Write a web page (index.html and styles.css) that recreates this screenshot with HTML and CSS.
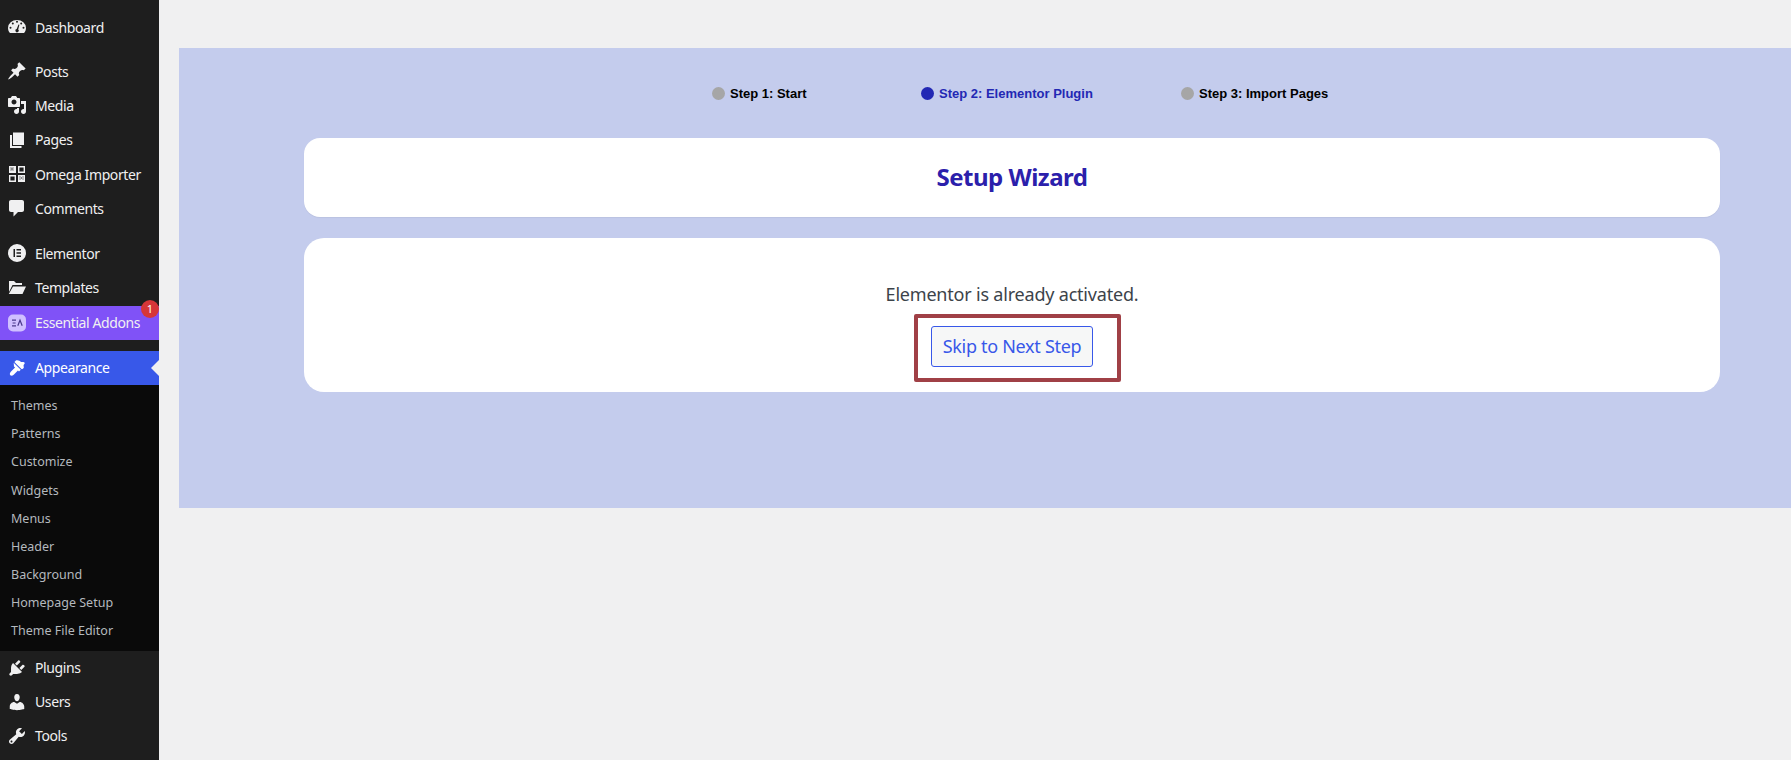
FILE: index.html
```html
<!DOCTYPE html>
<html lang="en">
<head>
<meta charset="utf-8">
<title>Setup Wizard</title>
<link rel="stylesheet" href="styles.css">
</head>
<body>
<div class="layout">
  <nav class="sidebar">
    <ul class="menu menu-first">
      <li class="item"><svg class="ico" viewBox="0 0 20 20"><path fill-rule="evenodd" d="M3 16h14c1.300-1.400 2-3.200 2-5a9 8 0 1 0-18 0c0 1.800.7 3.600 2 5zM10 3.800a1 1 0 1 1 0 2 1 1 0 0 1 0-2zM5.800 5.500a1 1 0 1 1 0 2 1 1 0 0 1 0-2zm8.400 0a1 1 0 1 1 0 2 1 1 0 0 1 0-2zM3.500 9.800a1 1 0 1 1 0 2 1 1 0 0 1 0-2zm13 0a1 1 0 1 1 0 2 1 1 0 0 1 0-2zM11.500 7.500l.9.3-1.200 4.600a1.700 1.700 0 1 1-1.500-.4z"/></svg><span>Dashboard</span></li>
    </ul>
    <ul class="menu menu-posts">
      <li class="item"><svg class="ico" viewBox="0 0 20 20"><path d="M10.440 3.020l1.820-1.820 6.360 6.350-1.830 1.820c-1.050-.68-2.480-.57-3.410.36l-.75.75c-.92.93-1.040 2.350-.35 3.410l-1.830 1.820-2.410-2.410-2.800 2.790c-.42.42-3.380 2.710-3.800 2.290s1.860-3.390 2.280-3.810l2.790-2.790L4.100 9.360l1.830-1.820c1.050.69 2.480.57 3.400-.36l.75-.75c.93-.92 1.050-2.350.36-3.410z"/></svg><span>Posts</span></li>
      <li class="item"><svg class="ico" viewBox="0 0 20 20"><path d="M13 11V4c0-.55-.45-1-1-1h-1.670L9 1H5L3.670 3H2c-.55 0-1 .45-1 1v7c0 .55.45 1 1 1h10c.55 0 1-.45 1-1zM7 4.500c1.380 0 2.500 1.120 2.500 2.500S8.380 9.500 7 9.500 4.500 8.380 4.500 7 5.620 4.500 7 4.500zM14 6h5v10.500c0 1.380-1.120 2.500-2.500 2.500S14 17.880 14 16.500s1.120-2.500 2.500-2.500c.17 0 .34.020.5.050V9h-3V6zm-4 8.050V13h2v3.500c0 1.380-1.120 2.500-2.500 2.500S7 17.880 7 16.500 8.120 14 9.500 14c.17 0 .34.020.5.050z"/></svg><span>Media</span></li>
      <li class="item"><svg class="ico" viewBox="0 0 20 20"><path d="M6 15V2.500h11V15zM5 16h9.500v2H3V5h2z"/></svg><span>Pages</span></li>
      <li class="item"><svg class="ico" viewBox="0 0 20 20"><path fill-rule="evenodd" d="M2 2h7v7H2zm1.500 1.500v1h1v-1zm2 0v1h1v-1zm-1 1.100v1h1v-1zm-1 1v1h1v-1zm2 0v1h1v-1zM11 2h7v7h-7zm1.400 1.400v4.200h4.200V3.400zM2 11h7v7H2zm1.400 1.400v4.200h4.200v-4.200zM11 11h7v7h-7zm1.500 1.500v1h1v-1zm3 0v1h1v-1zm-1.500 1v1h1v-1zm-1.500 1.100v1h1v-1zm3 0v1h1v-1z"/></svg><span>Omega Importer</span></li>
      <li class="item"><svg class="ico" viewBox="0 0 20 20"><path d="M4 2h11c1.100 0 2 .9 2 2v8c0 1.100-.9 2-2 2h-4l-4.500 4.500V14H4c-1.100 0-2-.9-2-2V4c0-1.100.9-2 2-2z"/></svg><span>Comments</span></li>
    </ul>
    <ul class="menu menu-elementor">
      <li class="item"><svg class="ico" viewBox="0 0 20 20"><path fill-rule="evenodd" d="M10 1a9 9 0 1 1 0 18 9 9 0 0 1 0-18zM6.500 6v8H8V6zm3 0v1.500H14V6zm0 3.200v1.500H14V9.200zm0 3.300V14H14v-1.500z"/></svg><span>Elementor</span></li>
      <li class="item"><svg class="ico" viewBox="0 0 20 20"><path d="M2 4h5l2 2h6v2H5.500L2 15zM6 9.500h13L15.500 17H1.800z"/></svg><span>Templates</span></li>
      <li class="item item-ea"><svg class="ico" viewBox="0 0 20 20"><rect x="1" y="1.500" width="18" height="17" rx="5" fill="#d0c0ff"/><path d="M5 7.200h4M5.600 10h3M5 12.800h4M10.800 12.800l2.200-5.600 2.200 5.600" fill="none" stroke="#4a3a8c" stroke-width="1.200"/></svg><span>Essential Addons</span><b class="badge">1</b></li>
    </ul>
    <ul class="menu menu-appearance">
      <li class="item item-current"><svg class="ico" viewBox="0 0 20 20"><path d="M14.480 11.060L7.410 3.990l1.500-1.500c.5-.560 2.300-.470 3.510.320 1.210.8 1.430 1.280 2.410 1.280.98 0 2.400-.4 2.800.6.4 1-.7 1.300-1 2.400-.2.900.2 1.600.2 2.500 0 1-1.800 2-2.350 1.470zM6.700 4.700l7.070 7.070-1.770 1.770-1.060-1.060-4.240 4.240c-.6.600-2.400 1.500-3.400.5s-.1-2.800.5-3.400l4.240-4.240-1.060-1.060z"/></svg><span>Appearance</span><i class="caret"></i></li>
      <li>
        <ul class="submenu">
          <li>Themes</li>
          <li>Patterns</li>
          <li>Customize</li>
          <li>Widgets</li>
          <li>Menus</li>
          <li>Header</li>
          <li>Background</li>
          <li>Homepage Setup</li>
          <li>Theme File Editor</li>
        </ul>
      </li>
      <li class="item"><svg class="ico" viewBox="0 0 20 20"><path d="M13.110 4.360L9.870 7.600 8 5.730l3.240-3.240c.35-.34 1.050-.2 1.560.32.52.51.66 1.210.31 1.550zm-8 1.770l.91-1.120 9.010 9.010-1.190.84c-.71.71-2.630 1.160-3.820 1.160H6.140L4.900 17.260c-.59.59-1.540.59-2.120 0-.59-.58-.59-1.530 0-2.120l1.240-1.240v-3.880c0-1.130.4-3.190 1.090-3.890zm7.260 3.970l3.240-3.240c.34-.35 1.040-.21 1.550.31.52.51.66 1.210.31 1.550l-3.240 3.250z"/></svg><span>Plugins</span></li>
      <li class="item"><svg class="ico" viewBox="0 0 20 20"><path d="M10 9.250c-2.270 0-2.730-3.440-2.730-3.440C7 4.020 7.820 2 9.970 2c2.160 0 2.980 2.020 2.710 3.810 0 0-.41 3.440-2.680 3.440zm0 2.570L12.720 10c2.390 0 4.520 2.330 4.520 4.530v2.490s-3.650 1.130-7.240 1.130c-3.650 0-7.240-1.130-7.240-1.130v-2.490c0-2.250 1.940-4.480 4.470-4.480z"/></svg><span>Users</span></li>
      <li class="item"><svg class="ico" viewBox="0 0 20 20"><path d="M16.680 9.770c-1.340 1.340-3.300 1.670-4.950.99l-5.410 6.520c-.99.990-2.590.99-3.580 0s-.99-2.590 0-3.570l6.520-5.420c-.68-1.650-.35-3.610.99-4.950 1.280-1.280 3.120-1.620 4.720-1.060l-2.890 2.890 2.820 2.820 2.860-2.870c.53 1.590.19 3.400-1.080 4.650zM3.810 16.210c.4.390 1.030.39 1.420 0 .4-.4.400-1.030 0-1.430-.39-.39-1.020-.39-1.420 0a1.020 1.020 0 0 0 0 1.430z"/></svg><span>Tools</span></li>
    </ul>
  </nav>
  <main class="content">
    <section class="panel">
      <ol class="steps">
        <li class="step"><i class="dot"></i>Step 1: Start</li>
        <li class="step step-active"><i class="dot"></i>Step 2: Elementor Plugin</li>
        <li class="step"><i class="dot"></i>Step 3: Import Pages</li>
      </ol>
      <div class="card card-title"><h1>Setup Wizard</h1></div>
      <div class="card card-body">
        <p>Elementor is already activated.</p>
        <div class="highlight"><a class="btn" href="#">Skip to Next Step</a></div>
      </div>
    </section>
  </main>
</div>
</body>
</html>
```
FILE: styles.css
```css
* { box-sizing: border-box; }
html, body { margin: 0; height: 100%; }
body { background: #f0f0f1; font-family: "Noto Sans", sans-serif; overflow: hidden; }
ul, ol { list-style: none; margin: 0; padding: 0; }

.layout { display: flex; height: 760px; }
.sidebar { width: 159px; flex: none; background: #1e1e1e; color: #f0f0f1; height: 760px; }
.menu-first { padding-top: 10px; }
.menu-posts { margin-top: 10px; }
.menu-posts .item { height: 34.3px; }
.menu-elementor { margin-top: 11px; }
.menu-appearance { margin-top: 11px; }

.item { position: relative; display: flex; align-items: center; height: 34px; padding-left: 7px; font-size: 14px; gap: 8px; }
.item span { letter-spacing: -0.4px; }
.menu-elementor .item + .item-ea { margin-top: 1.5px; }
.ico { width: 20px; height: 20px; flex: none; fill: #f0f0f1; }
.item-ea { background: #8052f7; }
.badge { position: absolute; right: 0; top: -6px; width: 18px; height: 18px; border-radius: 50%; background: #d63638; color: #fff; font-size: 11px; font-weight: 400; line-height: 18px; text-align: center; }
.item-current { background: #3858e9; color: #fff; }
.item-current .ico { fill: #fff; }
.caret { position: absolute; right: 0; top: 9px; border: 8px solid transparent; border-right-color: #f0f0f1; border-left-width: 0; }

.submenu { background: #0a0a0a; padding: 7px 0 5px; color: #b4b9be; font-size: 12.500px; }
.submenu li { height: 28.2px; line-height: 28.2px; padding-left: 11px; letter-spacing: 0; }

.content { flex: 1; min-width: 0; padding: 48px 0 0 20px; }
.panel { background: #c4cced; height: 460px; padding: 36px 71px 0 125px; }
.steps { display: grid; grid-template-columns: 209px 260px auto; padding-left: 408px; font: bold 13px "Liberation Sans", sans-serif; color: #000; height: 18px; }
.step { display: flex; align-items: center; gap: 5px; height: 18px; }
.dot { width: 13px; height: 13px; border-radius: 50%; background: #a6a6a6; }
.step-active { color: #2328b4; }
.step-active .dot { background: #2328b4; }

.card { background: #fff; text-align: center; }
.card-title { margin-top: 36px; height: 79px; border-radius: 16px; display: flex; align-items: center; justify-content: center; box-shadow: 0 1px 1px rgba(0,0,0,.05); }
.card-title h1 { margin: 0 0 2px; font-size: 24px; font-weight: 700; color: #2b20ab; letter-spacing: -0.5px; }
.card-body { margin-top: 21px; height: 154px; border-radius: 20px; padding-top: 44px; }
.card-body p { margin: 0; font-size: 18px; line-height: 24px; color: #3c434a; letter-spacing: -0.2px; }
.highlight { display: inline-block; margin: 8px 0 0 11px; padding: 8px 24px 11px 13px; border: 4px solid #a04046; border-radius: 2px; }
.btn { display: block; width: 162px; height: 41px; line-height: 38px; background: #f6f7f7; border: 1px solid #3858e9; border-radius: 3px; color: #3858e9; font-size: 18px; text-decoration: none; letter-spacing: -0.3px; }
```
